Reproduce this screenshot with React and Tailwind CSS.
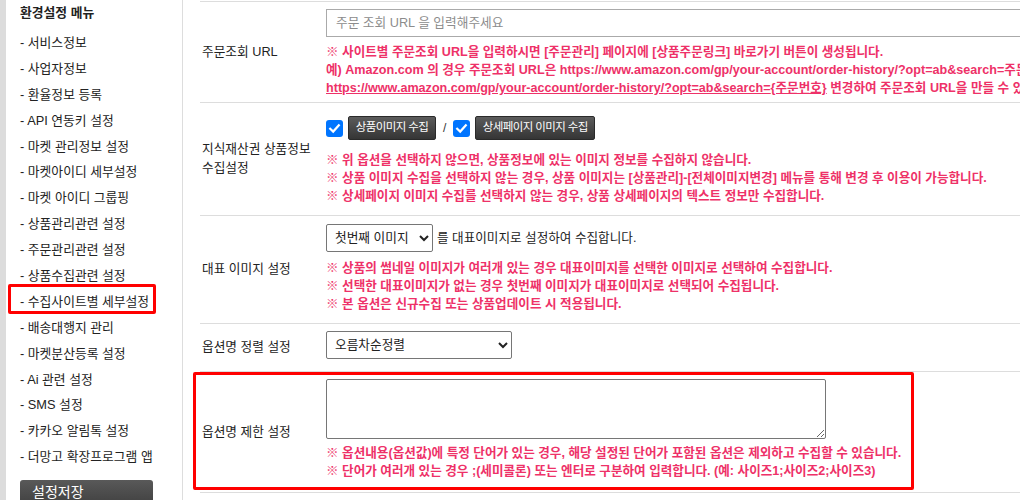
import React from 'react';

const menu = [
  '서비스정보',
  '사업자정보',
  '환율정보 등록',
  'API 연동키 설정',
  '마켓 관리정보 설정',
  '마켓아이디 세부설정',
  '마켓 아이디 그룹핑',
  '상품관리관련 설정',
  '주문관리관련 설정',
  '상품수집관련 설정',
  '수집사이트별 세부설정',
  '배송대행지 관리',
  '마켓분산등록 설정',
  'Ai 관련 설정',
  'SMS 설정',
  '카카오 알림톡 설정',
  '더망고 확장프로그램 앱',
];

function Check() {
  return (
    <span className="w-[17px] h-[17px] rounded-[3px] bg-[#0075ff] flex items-center justify-center shrink-0">
      <svg width="13" height="13" viewBox="0 0 13 13">
        <path d="M2.2 6.8 L5.2 9.6 L10.8 3.4" fill="none" stroke="white" strokeWidth="2.2" strokeLinecap="square" />
      </svg>
    </span>
  );
}

function DarkButton({ children, w }) {
  return (
    <button className={`h-[24px] ${w} rounded-[2px] border border-[#2a2a2a] bg-linear-to-b from-[#5c5c5c] to-[#353535] text-white text-[11.5px] tracking-[-0.6px] flex items-center justify-center shrink-0`}>
      {children}
    </button>
  );
}

function Notes({ lines, className = '' }) {
  return (
    <div className={`text-[12.6px] font-bold leading-[18px] text-[#ee3168] whitespace-nowrap ${className}`}>
      {lines.map((l, i) => (
        <div key={i}>{l}</div>
      ))}
    </div>
  );
}

function Row({ h, label, pt, children }) {
  return (
    <div className={`flex border-b border-[#dddddd] ${h}`}>
      <div className="w-[126px] shrink-0 self-center pl-[2px] text-[12.7px] leading-[19px] text-[#222]">{label}</div>
      <div className={`flex-1 min-w-0 ${pt}`}>{children}</div>
    </div>
  );
}

export default function App() {
  return (
    <div className="relative w-[1020px] h-[500px] overflow-hidden bg-white flex font-['Liberation_Sans','Noto_Sans_CJK_KR',sans-serif] text-[#222]">
      <div className="w-[6px] h-full bg-[#dcdcdc] shrink-0" />

      {/* Sidebar */}
      <div className="w-[177px] h-full shrink-0 border-r border-[#dddddd] pl-[14px] pt-[4px]">
        <div className="text-[12.8px] font-bold leading-[18px]">환경설정 메뉴</div>
        <div className="mt-[8px]">
          {menu.map((m) => (
            <div key={m} className="h-[25.9px] leading-[25.9px] text-[12.8px] whitespace-nowrap">- {m}</div>
          ))}
        </div>
        <button className="mt-[10px] w-[133px] h-[32px] rounded-t-[3px] bg-linear-to-b from-[#595959] to-[#3a3a3a] text-white text-[14px] leading-[20px] text-left pl-[12px] pb-[8px]">
          설정저장
        </button>
      </div>

      {/* Content */}
      <div className="flex-1 min-w-0 pl-[17px] pt-[1px]">
        <div className="border-t border-[#dddddd]">
          <Row h="h-[101px]" label="주문조회 URL" pt="pt-[7px]">
            <input
              type="text"
              placeholder="주문 조회 URL 을 입력해주세요"
              className="block w-[760px] h-[28px] border border-[#aaaaaa] px-[9px] text-[12.7px] placeholder:text-[#8c8c8c] outline-none"
            />
            <Notes
              className="mt-[6px]"
              lines={[
                '※ 사이트별 주문조회 URL을 입력하시면 [주문관리] 페이지에 [상품주문링크] 바로가기 버튼이 생성됩니다.',
                '예) Amazon.com 의 경우 주문조회 URL은 https://www.amazon.com/gp/your-account/order-history/?opt=ab&search=주문번호 입니다.',
                <>
                  <span className="underline">https://www.amazon.com/gp/your-account/order-history/?opt=ab&search={'{주문번호}'}</span> 변경하여 주문조회 URL을 만들 수 있습니다.
                </>,
              ]}
            />
          </Row>

          <Row
            h="h-[113px]"
            label={<>지식재산권 상품정보<br />수집설정</>}
            pt="pt-[13px]"
          >
            <div className="flex items-center h-[24px]">
              <Check />
              <div className="w-[5px]" />
              <DarkButton w="w-[88px]">상품이미지 수집</DarkButton>
              <span className="mx-[7px] text-[12px] text-[#333]">/</span>
              <Check />
              <div className="w-[5px]" />
              <DarkButton w="w-[120px]">상세페이지 이미지 수집</DarkButton>
            </div>
            <Notes
              className="mt-[11px]"
              lines={[
                '※ 위 옵션을 선택하지 않으면, 상품정보에 있는 이미지 정보를 수집하지 않습니다.',
                '※ 상품 이미지 수집을 선택하지 않는 경우, 상품 이미지는 [상품관리]-[전체이미지변경] 메뉴를 통해 변경 후 이용이 가능합니다.',
                '※ 상세페이지 이미지 수집를 선택하지 않는 경우, 상품 상세페이지의 텍스트 정보만 수집합니다.',
              ]}
            />
          </Row>

          <Row h="h-[108px]" label="대표 이미지 설정" pt="pt-[8px]">
            <div className="flex items-center">
              <select className="w-[107px] h-[28px] border border-[#767676] rounded-[2px] pl-[4px] text-[12.7px] text-[#222]">
                <option>첫번째 이미지</option>
              </select>
              <span className="ml-[4px] text-[12.6px] text-[#222]">를 대표이미지로 설정하여 수집합니다.</span>
            </div>
            <Notes
              className="mt-[7px]"
              lines={[
                '※ 상품의 썸네일 이미지가 여러개 있는 경우 대표이미지를 선택한 이미지로 선택하여 수집합니다.',
                '※ 선택한 대표이미지가 없는 경우 첫번째 이미지가 대표이미지로 선택되어 수집됩니다.',
                '※ 본 옵션은 신규수집 또는 상품업데이트 시 적용됩니다.',
              ]}
            />
          </Row>

          <Row h="h-[48px]" label="옵션명 정렬 설정" pt="pt-[7px]">
            <select className="w-[186px] h-[28px] border border-[#767676] rounded-[2px] pl-[4px] text-[12.7px] text-[#222]">
              <option>오름차순정렬</option>
            </select>
          </Row>

          <Row h="h-[121px]" label="옵션명 제한 설정" pt="pt-[7px]">
            <textarea className="block w-[500px] h-[60px] border border-[#767676] rounded-[2px] outline-none" />
            <Notes
              className="mt-[5px]"
              lines={[
                '※ 옵션내용(옵션값)에 특정 단어가 있는 경우, 해당 설정된 단어가 포함된 옵션은 제외하고 수집할 수 있습니다.',
                '※ 단어가 여러개 있는 경우 ;(세미콜론) 또는 엔터로 구분하여 입력합니다. (예: 사이즈1;사이즈2;사이즈3)',
              ]}
            />
          </Row>
        </div>
      </div>

      {/* highlight overlays */}
      <div className="absolute left-[8px] top-[284px] w-[148px] h-[30px] border-[3px] border-[#ff0000] rounded-[2px] pointer-events-none" />
      <div className="absolute left-[193px] top-[372px] w-[721px] h-[118px] border-[3px] border-[#ff0000] rounded-[2px] pointer-events-none" />
    </div>
  );
}
